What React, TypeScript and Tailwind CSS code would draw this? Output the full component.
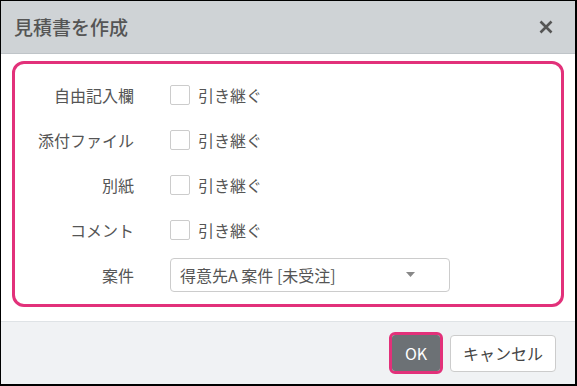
import React from 'react'

const fields = ['自由記入欄', '添付ファイル', '別紙', 'コメント']

const font = { fontFamily: '"Noto Sans CJK JP", "Noto Sans", sans-serif' }

const CheckRow = ({ label }: { label: string }) => (
    <div className="flex h-[45px] items-center">
        <div className="w-[119px] text-right text-[16px] text-[#555]">{label}</div>
        <div className="ml-[36px] h-[20px] w-[20px] rounded-[2px] border border-[#ccc] bg-white" />
        <span className="ml-[8px] text-[16px] text-[#555]">引き継ぐ</span>
    </div>
)

export default function App() {
    return (
        <div
            className="flex h-[386px] w-[577px] flex-col border-t border-l border-r-2 border-b-2 border-black bg-white"
            style={font}
        >
            <div className="flex h-[53px] shrink-0 items-center justify-between border-b border-[#bfc4c8] bg-[#cfd3d6] pl-[13px] pr-[16px]">
                <h1 className="text-[19px] font-medium text-[#555]">見積書を作成</h1>
                <svg width="14" height="14" viewBox="0 0 14 14" className="mr-[6px]">
                    <path d="M1.5 1.5 L12.5 12.5 M12.5 1.5 L1.5 12.5" stroke="#555" strokeWidth="2.6" />
                </svg>
            </div>

            <div className="flex-1 px-[11px] pt-[7px]">
                <div className="rounded-[12px] border-[3px] border-[#e2317a] pt-[8px] pb-[7px]">
                    {fields.map((f) => (
                        <CheckRow key={f} label={f} />
                    ))}
                    <div className="flex h-[45px] items-center">
                        <div className="w-[119px] text-right text-[16px] text-[#555]">案件</div>
                        <div className="ml-[36px] flex h-[34px] w-[280px] items-center justify-between rounded-[4px] border border-[#ccc] bg-white pl-[9px] pr-[34px]">
                            <span className="text-[16px] text-[#555]">得意先A 案件 [未受注]</span>
                            <svg width="9" height="5" viewBox="0 0 9 5">
                                <path d="M0 0 L9 0 L4.5 5 Z" fill="#888" />
                            </svg>
                        </div>
                    </div>
                </div>
            </div>

            <div className="flex h-[63px] shrink-0 items-center justify-end gap-[7px] border-t border-[#dfe3e6] bg-[#f0f2f4] pr-[19px]">
                <div className="rounded-[6px] border-[3px] border-[#e2317a]">
                    <button className="flex h-[36px] w-[48px] items-center justify-center rounded-[3px] bg-[#6c7175] text-[16px] text-white">
                        OK
                    </button>
                </div>
                <button className="flex h-[37px] w-[106px] items-center justify-center rounded-[4px] border border-[#ccc] bg-white text-[16px] text-[#444]">
                    キャンセル
                </button>
            </div>
        </div>
    )
}
